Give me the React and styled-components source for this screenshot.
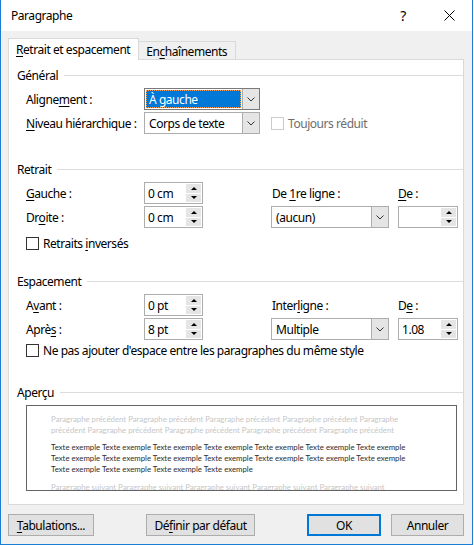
import React from 'react';
import styled, { createGlobalStyle } from 'styled-components';

const GlobalStyle = createGlobalStyle`
  html, body {
    margin: 0;
    padding: 0;
    background: #ffffff;
  }
  body {
    font-family: "Noto Sans", "Segoe UI", sans-serif;
    font-size: 12px;
    letter-spacing: -0.45px;
    color: #000;
  }
`;

const Window = styled.div`
  width: 473px;
  height: 545px;
  box-sizing: border-box;
  border: 1px solid #1a7fd4;
  border-top: none;
  background: #f0f0f0;
  display: flex;
  flex-direction: column;
`;

const TitleBar = styled.div`
  height: 31px;
  flex: none;
  background: #fff;
  display: flex;
  align-items: center;
  padding-left: 10px;
`;

const Title = styled.span`
  flex: 1;
`;

const Help = styled.span`
  font-size: 14px;
  margin-right: 38px;
`;

const CloseIcon = styled.svg`
  width: 11px;
  height: 11px;
  margin-right: 17px;
`;

const Body = styled.div`
  flex: 1;
  display: flex;
  flex-direction: column;
  padding: 7px 8px 8px 7px;
`;

const TabBar = styled.div`
  display: flex;
  align-items: flex-end;
  height: 21px;
  position: relative;
  z-index: 1;
`;

const Tab = styled.div`
  box-sizing: border-box;
  border: 1px solid #d9d9d9;
  border-bottom: none;
  display: flex;
  align-items: center;
  padding: 0 8px 0 7px;
  background: ${p => (p.$active ? '#fff' : '#f0f0f0')};
  height: ${p => (p.$active ? '22px' : '18px')};
  margin-bottom: ${p => (p.$active ? '-1px' : '0')};
  margin-left: ${p => (p.$active ? '0' : '-1px')};
  padding-top: ${p => (p.$active ? '0' : '1px')};
`;

const Panel = styled.div`
  height: 446px;
  box-sizing: border-box;
  background: #fff;
  border: 1px solid #d9d9d9;
  padding: 7px 0 0 8px;
`;

const Section = styled.div`
  margin-top: ${p => p.$top}px;
`;

const Heading = styled.div`
  display: flex;
  align-items: center;
  height: 16px;
  &::after {
    content: '';
    flex: 1;
    height: 1px;
    background: #dcdcdc;
    margin-left: 6px;
  }
`;

const Fields = styled.div`
  display: grid;
  grid-template-columns: ${p => p.$cols};
  grid-auto-rows: 22px;
  row-gap: 2px;
  align-items: center;
  margin: 5px 0 0 9px;
`;

const Label = styled.span`
  color: ${p => (p.$disabled ? '#6d6d6d' : '#000')};
  white-space: nowrap;
  padding-left: ${p => p.$indent || 0}px;
`;

const U = styled.span`
  text-decoration: underline;
  text-underline-offset: 2px;
`;

const Combo = styled.div`
  box-sizing: border-box;
  height: 22px;
  border: 1px solid ${p => (p.$focus ? '#7a7a7a' : '#adadad')};
  background: #fff;
  display: flex;
`;

const ComboText = styled.div`
  flex: 1;
  display: flex;
  align-items: center;
  padding-left: 3px;
  margin: 1px;
  color: ${p => (p.$selected ? '#fff' : '#000')};
  background: ${p => (p.$selected ? '#0078d7' : 'transparent')};
  outline: ${p => (p.$selected ? '1px dotted #f3a05c' : 'none')};
  outline-offset: -1px;
`;

const ComboButton = styled.div`
  width: 16px;
  background: #e5e5e5;
  border-left: 1px solid #adadad;
  display: flex;
  align-items: center;
  justify-content: center;
`;

const Spin = styled.div`
  box-sizing: border-box;
  height: 22px;
  border: 1px solid #adadad;
  background: #fff;
  display: flex;
`;

const SpinText = styled.div`
  flex: 1;
  display: flex;
  align-items: center;
  padding-left: 3px;
`;

const SpinButtons = styled.div`
  width: 15px;
  margin: 1px 1px 1px 0;
  display: flex;
  flex-direction: column;
  gap: 1px;
`;

const SpinHalf = styled.div`
  flex: 1;
  background: #e5e5e5;
  display: flex;
  align-items: center;
  justify-content: center;
`;

const Arrow = styled.div`
  width: 0;
  height: 0;
  border-left: 3px solid transparent;
  border-right: 3px solid transparent;
  ${p => (p.$up ? 'border-bottom: 3px solid #000;' : 'border-top: 3px solid #000;')}
`;

const CheckRow = styled.label`
  display: flex;
  align-items: center;
  gap: 4px;
  margin: ${p => p.$margin};
  height: 15px;
`;

const Box = styled.span`
  box-sizing: border-box;
  width: 13px;
  height: 13px;
  border: 1px solid ${p => (p.$disabled ? '#cccccc' : '#333333')};
  background: #fff;
  flex: none;
`;

const Preview = styled.div`
  box-sizing: border-box;
  height: 86px;
  width: 431px;
  margin: 5px 0 0 9px;
  border: 1px solid #646464;
  overflow: hidden;
  padding: 8px 0 0 24px;
  font-family: Lato, "Liberation Sans", sans-serif;
  font-size: 7.8px;
  letter-spacing: 0;
`;

const PreviewGroup = styled.div`
  color: ${p => (p.$ghost ? '#c6c6c6' : '#2e2e2e')};
  margin-bottom: ${p => p.$after || 0}px;
  line-height: 11px;
  white-space: nowrap;
`;

const ButtonRow = styled.div`
  display: flex;
  margin-top: 9px;
`;

const Button = styled.div`
  box-sizing: border-box;
  height: 22px;
  width: ${p => p.$w}px;
  margin-left: ${p => p.$ml || '0'};
  background: #e1e1e1;
  border: ${p => (p.$default ? '2px solid #0078d7' : '1px solid #adadad')};
  display: flex;
  align-items: center;
  justify-content: center;
`;

const Chevron = () => (
  <svg width="8" height="5" viewBox="0 0 8 5">
    <path d="M0.5 0.5 L4 4 L7.5 0.5" fill="none" stroke="#333" strokeWidth="1" />
  </svg>
);

const Select = ({ children, selected, focus }) => (
  <Combo $focus={focus}>
    <ComboText $selected={selected}>{children}</ComboText>
    <ComboButton><Chevron /></ComboButton>
  </Combo>
);

const Spinner = ({ value }) => (
  <Spin>
    <SpinText>{value}</SpinText>
    <SpinButtons>
      <SpinHalf><Arrow $up /></SpinHalf>
      <SpinHalf><Arrow /></SpinHalf>
    </SpinButtons>
  </Spin>
);

const Check = ({ children, disabled, margin }) => (
  <CheckRow $margin={margin}>
    <Box $disabled={disabled} />
    <Label $disabled={disabled}>{children}</Label>
  </CheckRow>
);

const ghostPrev = 'Paragraphe précédent ';
const sample = 'Texte exemple ';

export default function App() {
  return (
    <>
      <GlobalStyle />
      <Window>
        <TitleBar>
          <Title>Paragraphe</Title>
          <Help>?</Help>
          <CloseIcon viewBox="0 0 11 11">
            <path d="M0.5 0.5 L10.5 10.5 M10.5 0.5 L0.5 10.5" stroke="#000" strokeWidth="1" />
          </CloseIcon>
        </TitleBar>
        <Body>
          <TabBar>
            <Tab $active><span><U>R</U>etrait et espacement</span></Tab>
            <Tab><span>En<U>c</U>haînements</span></Tab>
          </TabBar>
          <Panel>
            <Section $top={0}>
              <Heading>Général</Heading>
              <Fields $cols="118px 116px auto">
                <Label>Aligne<U>m</U>ent :</Label>
                <Select selected focus>À gauche</Select>
                <span />
                <Label><U>N</U>iveau hiérarchique :</Label>
                <Select>Corps de texte</Select>
                <Check disabled margin="0 0 0 11px">Toujours réduit</Check>
              </Fields>
            </Section>

            <Section $top={27}>
              <Heading>Retrait</Heading>
              <Fields $cols="118px 59px 68px 118px 9px 60px">
                <Label><U>G</U>auche :</Label>
                <Spinner value="0 cm" />
                <span />
                <Label $indent={1}>De <U>1</U>re ligne :</Label>
                <span />
                <Label><U>D</U>e :</Label>
                <Label>Dr<U>o</U>ite :</Label>
                <Spinner value="0 cm" />
                <span />
                <Select>(aucun)</Select>
                <span />
                <Spinner value="" />
              </Fields>
              <Check margin="8px 0 0 9px">Retraits <U>i</U>nversés</Check>
            </Section>

            <Section $top={22}>
              <Heading>Espacement</Heading>
              <Fields $cols="118px 59px 68px 118px 9px 60px">
                <Label>A<U>v</U>ant :</Label>
                <Spinner value="0 pt" />
                <span />
                <Label $indent={1}>Inter<U>l</U>igne :</Label>
                <span />
                <Label>D<U>e</U> :</Label>
                <Label>Aprè<U>s</U> :</Label>
                <Spinner value="8 pt" />
                <span />
                <Select>Multiple</Select>
                <span />
                <Spinner value="1.08" />
              </Fields>
              <Check margin="3px 0 0 9px">Ne pas a<U>j</U>outer d'espace entre les paragraphes du même style</Check>
            </Section>

            <Section $top={26}>
              <Heading>Aperçu</Heading>
              <Preview>
                <PreviewGroup $ghost $after={6}>
                  <div>{ghostPrev.repeat(4)}Paragraphe</div>
                  <div>précédent {ghostPrev.repeat(3)}Paragraphe précédent</div>
                </PreviewGroup>
                <PreviewGroup $after={7}>
                  <div>{sample.repeat(7)}</div>
                  <div>{sample.repeat(7)}</div>
                  <div>{sample.repeat(4)}</div>
                </PreviewGroup>
                <PreviewGroup $ghost>
                  <div>{'Paragraphe suivant '.repeat(5)}</div>
                </PreviewGroup>
              </Preview>
            </Section>
          </Panel>
          <ButtonRow>
            <Button $w={86}><span><U>T</U>abulations...</span></Button>
            <Button $w={109} $ml="52px"><span>Dé<U>f</U>inir par défaut</span></Button>
            <Button $w={74} $ml="auto" $default>OK</Button>
            <Button $w={73} $ml="10px">Annuler</Button>
          </ButtonRow>
        </Body>
      </Window>
    </>
  );
}
